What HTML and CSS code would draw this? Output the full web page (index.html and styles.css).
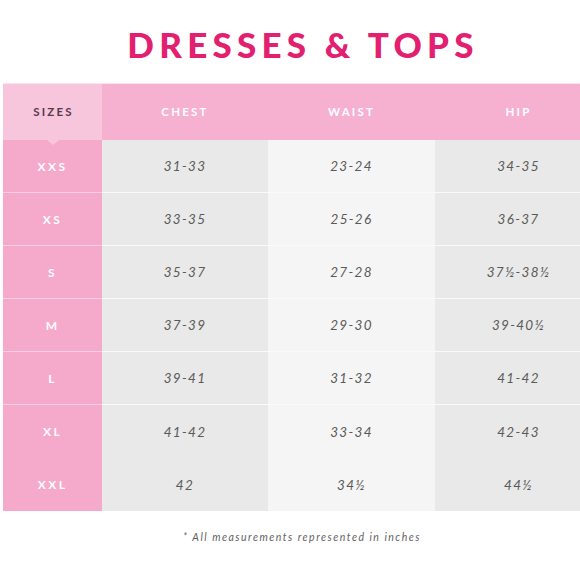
FILE: index.html
```html
<!DOCTYPE html>
<html>
<head>
<meta charset="utf-8">
<link rel="stylesheet" href="styles.css">
</head>
<body>
<div class="page">
  <h1 class="title">DRESSES &amp; TOPS</h1>
  <div class="chart">
    <div class="hcell sizes-h">SIZES</div>
    <div class="hcell">CHEST</div>
    <div class="hcell">WAIST</div>
    <div class="hcell">HIP</div>

    <div class="size">XXS</div><div class="c dark">31-33</div><div class="c light">23-24</div><div class="c dark">34-35</div>
    <div class="size">XS</div><div class="c dark">33-35</div><div class="c light">25-26</div><div class="c dark">36-37</div>
    <div class="size">S</div><div class="c dark">35-37</div><div class="c light">27-28</div><div class="c dark">37½-38½</div>
    <div class="size">M</div><div class="c dark">37-39</div><div class="c light">29-30</div><div class="c dark">39-40½</div>
    <div class="size">L</div><div class="c dark">39-41</div><div class="c light">31-32</div><div class="c dark">41-42</div>
    <div class="size last">XL</div><div class="c dark last">41-42</div><div class="c light last">33-34</div><div class="c dark last">42-43</div>
    <div class="size last">XXL</div><div class="c dark last">42</div><div class="c light last">34½</div><div class="c dark last">44½</div>
  </div>
  <p class="note">* All measurements represented in inches</p>
</div>
</body>
</html>
```
FILE: styles.css
```css
html, body {
  margin: 0;
  padding: 0;
  background: #ffffff;
  overflow: hidden;
}
.page {
  width: 580px;
  height: 580px;
  overflow: hidden;
  font-family: Lato, "Open Sans", sans-serif;
}
.title {
  margin: 0;
  padding-top: 24px;
  height: 83px;
  box-sizing: border-box;
  text-align: center;
  color: #e2206f;
  font-size: 35px;
  font-weight: 900;
  letter-spacing: 5.2px;
  line-height: 40px;
  padding-left: 26px;
}
.chart {
  margin-left: 3px;
  display: grid;
  grid-template-columns: 99px 166px 167px 167px;
  grid-template-rows: 57px repeat(7, 53px);
  width: 599px;
}
.hcell {
  background: #f6b1d1;
  color: #ffffff;
  font-weight: 700;
  font-size: 11.5px;
  letter-spacing: 2.2px;
  display: flex;
  align-items: center;
  justify-content: center;
  border-top: 1px solid #fbe3ee;
  padding-bottom: 1px;
}
.sizes-h {
  background: #f8c6dc;
  color: #57394a;
  position: relative;
  padding-left: 2px;
}
.sizes-h::after {
  content: "";
  position: absolute;
  left: 44px;
  bottom: -5px;
  border-left: 6px solid transparent;
  border-right: 6px solid transparent;
  border-top: 5px solid #f8c6dc;
  z-index: 2;
}
.size {
  background: #f5a9cb;
  color: #ffffff;
  font-weight: 700;
  font-size: 12px;
  letter-spacing: 2.4px;
  display: flex;
  align-items: center;
  justify-content: center;
  border-bottom: 1px solid #f9cfe1;
}
.c {
  display: flex;
  align-items: center;
  justify-content: center;
  font-style: italic;
  font-size: 13.5px;
  letter-spacing: 1.3px;
  color: #5a5a5a;
  border-bottom: 1px solid #fafafa;
}
.dark { background: #e9e9e9; }
.light { background: #f5f5f5; }
.last { border-bottom: none; }
.note {
  margin: 20px 0 0;
  text-align: center;
  padding-left: 24px;
  font-style: italic;
  font-size: 10.5px;
  letter-spacing: 1.5px;
  color: #5f5f5f;
}
```
